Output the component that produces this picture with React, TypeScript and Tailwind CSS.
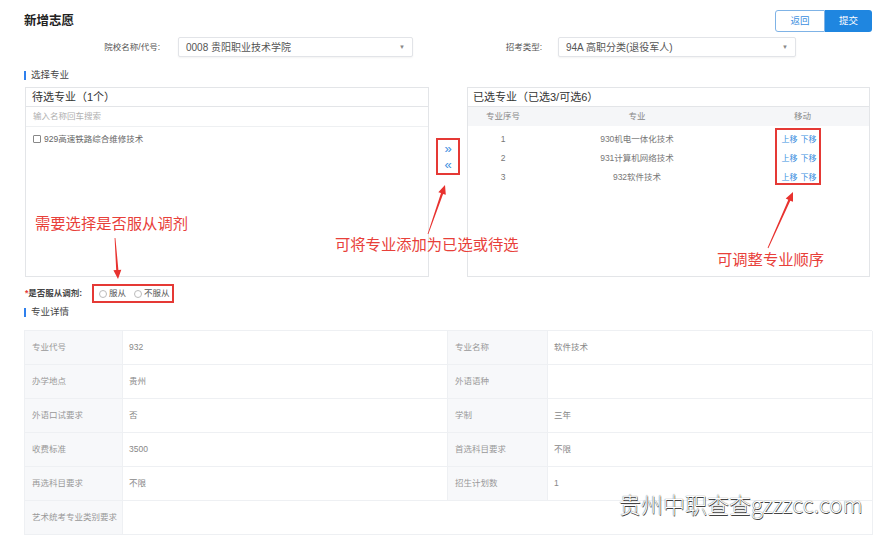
import React from "react";

const FONT = { fontFamily: '"Liberation Sans", "Noto Sans CJK SC", sans-serif' };

function Arrow({ x1, y1, x2, y2 }: { x1: number; y1: number; x2: number; y2: number }) {
  const dx = x2 - x1;
  const dy = y2 - y1;
  const len = Math.sqrt(dx * dx + dy * dy);
  const ux = dx / len;
  const uy = dy / len;
  const px = -uy;
  const py = ux;
  const headLen = 9;
  const headW = 4;
  const bx = x2 - ux * headLen;
  const by = y2 - uy * headLen;
  const tail = 0.4;
  const neck = 1.1;
  const pts = [
    [x1 + px * tail, y1 + py * tail],
    [bx + px * neck, by + py * neck],
    [bx + px * headW, by + py * headW],
    [x2, y2],
    [bx - px * headW, by - py * headW],
    [bx - px * neck, by - py * neck],
    [x1 - px * tail, y1 - py * tail],
  ]
    .map((p) => `${p[0].toFixed(1)},${p[1].toFixed(1)}`)
    .join(" ");
  return <polygon points={pts} fill="#e8322f" />;
}

const details: [string, string, string, string][] = [
  ["专业代号", "932", "专业名称", "软件技术"],
  ["办学地点", "贵州", "外语语种", ""],
  ["外语口试要求", "否", "学制", "三年"],
  ["收费标准", "3500", "首选科目要求", "不限"],
  ["再选科目要求", "不限", "招生计划数", "1"],
];

const selected = [
  ["1", "930机电一体化技术"],
  ["2", "931计算机网络技术"],
  ["3", "932软件技术"],
];

export default function App() {
  return (
    <div className="relative w-[880px] h-[536px] overflow-hidden bg-white text-[#333]" style={FONT}>
      <div className="pl-[24px] pr-[8px] pt-[10px]">
        {/* title row */}
        <div className="flex h-[22px] items-center justify-between">
          <div className="text-[12.5px] font-bold text-[#222] leading-none">新增志愿</div>
          <div className="flex h-[22px]">
            <div className="flex w-[50px] items-center justify-center rounded-l-[3px] border border-[#7fb3e6] text-[9.5px] text-[#3d8fe0]">
              返回
            </div>
            <div className="flex w-[47px] items-center justify-center rounded-r-[3px] bg-[#1f86e0] text-[9.5px] text-white">
              提交
            </div>
          </div>
        </div>

        {/* selects row */}
        <div className="mt-[5px] flex h-[20px] items-center">
          <div className="w-[136px] text-right text-[8.5px] text-[#555]">院校名称/代号:</div>
          <div className="ml-[18px] flex h-[20px] w-[235px] items-center justify-between rounded-[2px] border border-[#e2e4e8] bg-white pl-[7px] pr-[7px] shadow-[0_1px_2px_rgba(0,0,0,0.05)]">
            <span className="text-[10px] text-[#555]">0008 贵阳职业技术学院</span>
            <span className="text-[6px] text-[#888]">▼</span>
          </div>
          <div className="ml-[9px] w-[120px] text-right text-[8.5px] text-[#555]">招考类型:</div>
          <div className="ml-[16px] flex h-[20px] w-[238px] items-center justify-between rounded-[2px] border border-[#e2e4e8] bg-white pl-[7px] pr-[7px] shadow-[0_1px_2px_rgba(0,0,0,0.05)]">
            <span className="text-[10px] text-[#555]">94A 高职分类(退役军人)</span>
            <span className="text-[6px] text-[#888]">▼</span>
          </div>
        </div>

        {/* section header */}
        <div className="mt-[11px] flex h-[14px] items-center">
          <div className="h-[9px] w-[2px] bg-[#2f80ed]" />
          <div className="ml-[5px] text-[9.5px] text-[#444]">选择专业</div>
        </div>

        {/* panels */}
        <div className="mt-[5px] flex h-[190px]">
          <div className="ml-[1px] flex w-[404px] flex-col border border-[#e3e5e8]">
            <div className="flex h-[19px] items-center border-b border-[#e3e5e8] pl-[6px] text-[11px] text-[#333]">
              待选专业（1个）
            </div>
            <div className="flex h-[20px] items-center border-b border-[#eef0f2] pl-[7px] text-[8.5px] text-[#b0b0b0]">
              输入名称回车搜索
            </div>
            <div className="flex items-center pl-[7px] pt-[6px]">
              <div className="h-[8px] w-[8px] rounded-[1px] border border-[#888]" />
              <span className="ml-[3px] text-[8.5px] text-[#666]">929高速铁路综合维修技术</span>
            </div>
          </div>

          <div className="w-[38px]">
            <div className="ml-[7px] mt-[51px] flex h-[37px] w-[24px] flex-col items-center justify-center gap-[2px] border-2 border-[#e53935] text-[#3d8fe0]">
              <span className="text-[13px] leading-[14px]">»</span>
              <span className="text-[13px] leading-[14px]">«</span>
            </div>
          </div>

          <div className="flex w-[403px] flex-col border border-[#e3e5e8]">
            <div className="flex h-[19px] items-center border-b border-[#e3e5e8] pl-[5px] text-[11px] text-[#333]">
              已选专业（已选3/可选6）
            </div>
            <div className="grid h-[19px] grid-cols-[70px_198px_1fr] items-center bg-[#f5f6f8] text-center text-[8.5px] text-[#888]">
              <span>专业序号</span>
              <span>专业</span>
              <span>移动</span>
            </div>
            <div className="pt-[4px]">
              {selected.map(([n, name]) => (
                <div key={n} className="grid h-[19px] grid-cols-[70px_198px_126px_1fr] items-center text-center text-[8.5px] text-[#777]">
                  <span>{n}</span>
                  <span>{name}</span>
                  <span className="text-[8px] text-[#3d8fe0]">
                    上移<span className="ml-[3px]">下移</span>
                  </span>
                  <span />
                </div>
              ))}
            </div>
          </div>
        </div>

        {/* radio row */}
        <div className="mt-[7px] flex h-[19px] items-center">
          <div className="ml-[1px] w-[67px] text-[8.5px] font-bold text-[#444]">
            <span className="text-[#e53935]">*</span>是否服从调剂:
          </div>
          <div className="flex h-[19px] w-[82px] items-center border-2 border-[#e53935] pl-[5px]">
            <div className="h-[8px] w-[8px] rounded-full border border-[#bbb]" />
            <span className="ml-[2px] text-[8.5px] text-[#555]">服从</span>
            <div className="ml-[8px] h-[8px] w-[8px] rounded-full border border-[#bbb]" />
            <span className="ml-[2px] text-[8.5px] text-[#555]">不服从</span>
          </div>
        </div>

        {/* section header 2 */}
        <div className="mt-[2px] flex h-[14px] items-center">
          <div className="h-[9px] w-[2px] bg-[#2f80ed]" />
          <div className="ml-[5px] text-[9.5px] text-[#444]">专业详情</div>
        </div>

        {/* details table */}
        <div className="mt-[11px] grid grid-cols-[98px_325px_100px_325px] border-l border-t border-[#eef0f3]">
          {details.map((r, i) => (
            <React.Fragment key={i}>
              <div className="flex h-[34px] items-center border-b border-r border-[#eef0f3] bg-[#f7f8fa] pl-[7px] text-[8.5px] text-[#999]">{r[0]}</div>
              <div className="flex h-[34px] items-center border-b border-r border-[#eef0f3] pl-[6px] text-[8.5px] text-[#888]">{r[1]}</div>
              <div className="flex h-[34px] items-center border-b border-r border-[#eef0f3] bg-[#f7f8fa] pl-[7px] text-[8.5px] text-[#999]">{r[2]}</div>
              <div className="flex h-[34px] items-center border-b border-r border-[#eef0f3] pl-[6px] text-[8.5px] text-[#888]">{r[3]}</div>
            </React.Fragment>
          ))}
          <div className="flex h-[34px] items-center border-b border-r border-[#eef0f3] bg-[#f7f8fa] pl-[7px] text-[8.5px] text-[#999]">艺术统考专业类别要求</div>
          <div className="col-span-3 h-[34px] border-b border-r border-[#eef0f3]" />
        </div>
      </div>

      {/* annotation overlays */}
      <div className="absolute left-[775px] top-[128px] h-[57px] w-[46px] border-2 border-[#e53935]" />
      <svg className="pointer-events-none absolute left-0 top-0" width="880" height="536">
        <Arrow x1={115} y1={238} x2={118} y2={279} />
        <Arrow x1={428} y1={234} x2={445} y2={185} />
        <Arrow x1={768} y1={248} x2={793} y2={192} />
      </svg>
      <div className="absolute left-[35px] top-[216px] text-[15.3px] leading-[16px] text-[#e8403a]">需要选择是否服从调剂</div>
      <div className="absolute left-[335px] top-[237px] text-[15.3px] leading-[16px] text-[#e8403a]">可将专业添加为已选或待选</div>
      <div className="absolute left-[717px] top-[252px] text-[15.3px] leading-[16px] text-[#e8403a]">可调整专业顺序</div>
      <div
        className="absolute left-[619px] top-[491px] text-[22px] leading-[24px] text-white [text-shadow:0_0_1px_#333,0.5px_0.5px_0.5px_#444]"
        style={{ fontFamily: '"Noto Sans CJK SC", "DejaVu Sans", sans-serif', fontWeight: 300 }}
      >
        贵州中职查查gzzzcc.com
      </div>
    </div>
  );
}
